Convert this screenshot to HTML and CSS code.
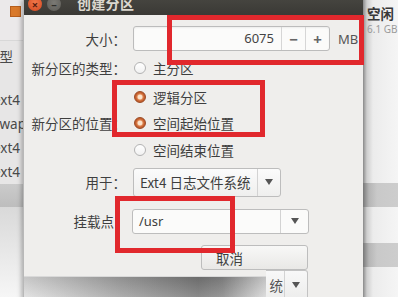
FILE: index.html
```html
<!DOCTYPE html>
<html lang="zh-CN">
<head>
<meta charset="utf-8">
<title>创建分区</title>
<link rel="stylesheet" href="styles.css">
</head>
<body>
<div class="screen">
  <aside class="bg-left">
    <div class="bl-top"><span class="app-icon"></span></div>
    <div class="bl-head"><span class="bl-cut">类型</span></div>
    <div class="bl-list">
      <div class="bl-item"><span class="bl-cut2">ext4</span></div>
      <div class="bl-item"><span class="bl-cut2">swap</span></div>
      <div class="bl-item"><span class="bl-cut2">ext4</span></div>
      <div class="bl-item"><span class="bl-cut2">ext4</span></div>
    </div>
    <div class="bl-band"></div>
    <div class="bl-foot"></div>
  </aside>

  <section class="dialog">
    <header class="titlebar">
      <span class="wbtn close">×</span>
      <span class="wbtn min">–</span>
      <span class="title">创建分区</span>
    </header>

    <div class="form">
      <label class="lbl">大小：</label>
      <div class="ctl">
        <div class="spin">
          <span class="spin-val">6075</span>
          <span class="spin-btn">−</span>
          <span class="spin-btn">+</span>
        </div>
        <span class="unit">MB</span>
      </div>

      <label class="lbl">新分区的类型：</label>
      <div class="ctl radio-row"><span class="radio"></span><span>主分区</span></div>

      <span class="lbl"></span>
      <div class="ctl radio-row"><span class="radio on"></span><span>逻辑分区</span></div>

      <label class="lbl">新分区的位置：</label>
      <div class="ctl radio-row"><span class="radio on"></span><span>空间起始位置</span></div>

      <span class="lbl"></span>
      <div class="ctl radio-row"><span class="radio"></span><span>空间结束位置</span></div>

      <label class="lbl">用于：</label>
      <div class="ctl">
        <div class="combo combo-fs">
          <span class="combo-text">Ext4 日志文件系统</span>
          <span class="combo-arrow"><i class="tri"></i></span>
        </div>
      </div>

      <label class="lbl lbl-mount">挂载点</label>
      <div class="ctl">
        <div class="combo combo-mount">
          <span class="combo-text">/usr</span>
          <span class="combo-arrow wide"><i class="tri"></i></span>
        </div>
      </div>

      <span class="lbl"></span>
      <div class="ctl ctl-end">
        <button class="btn-cancel">取消</button>
      </div>
    </div>

    <div class="bottom">
      <div class="shade"></div>
      <div class="combo-tail">
        <span class="tail-text">统</span>
        <span class="combo-arrow"><i class="tri"></i></span>
      </div>
    </div>
  </section>

  <aside class="bg-right">
    <div class="br-head">
      <div class="br-title">空闲</div>
      <div class="br-sub">6.1 GB</div>
    </div>
    <div class="br-band"></div>
    <div class="br-gap"></div>
    <div class="br-band"></div>
    <div class="br-rest"></div>
  </aside>

  <div class="mark mark-size"></div>
  <div class="mark mark-pos"></div>
  <div class="mark mark-mount"></div>
</div>
</body>
</html>
```

FILE: styles.css
```css
* { box-sizing: border-box; margin: 0; padding: 0; }
html, body { width: 398px; height: 297px; overflow: hidden; }
body {
  font-family: "Noto Sans", "Noto Sans CJK SC", sans-serif;
  color: #3e3e3e;
  background: #e8e8e8;
}

.screen {
  position: relative;
  display: grid;
  grid-template-columns: 23px 340px 35px;
  width: 398px;
  height: 297px;
  overflow: hidden;
}

/* ---------- left background window ---------- */
.bg-left {
  display: flex;
  flex-direction: column;
  background: #e7e6e6;
  overflow: hidden;
  font-size: 13.5px;
  color: #4a4a4a;
  white-space: nowrap;
}
.bl-top {
  height: 41px;
  padding: 6px 0 0 10px;
  border-bottom: 1px solid #d8d8d8;
  background: #ebe9ea;
}
.app-icon {
  display: block;
  width: 11px;
  height: 11px;
  background: #d9792a;
  border: 1px solid #b65e1c;
}
.bl-head {
  height: 29px;
  display: flex;
  align-items: center;
  font-family: "Noto Sans CJK SC", sans-serif;
}
.bl-cut { margin-left: -14px; }
.bl-list { padding-top: 18px; }
.bl-item {
  height: 24px;
  display: flex;
  align-items: center;
}
.bl-cut2 { margin-left: -7px; }
.bl-band {
  height: 23px;
  background: linear-gradient(#cbcbcb, #bdbdbd);
}
.bl-foot {
  flex: 1;
  background: linear-gradient(#d9d9d9, #f7f7f7);
}

/* ---------- dialog ---------- */
.dialog {
  position: relative;
  z-index: 1;
  display: flex;
  flex-direction: column;
  background: #efeeec;
  border-left: 1px solid #b8b8b8;
  box-shadow: -2px 0 4px rgba(0, 0, 0, 0.25);
}
.titlebar {
  height: 15px;
  flex: none;
  display: flex;
  align-items: flex-start;
  padding-left: 4px;
  gap: 5px;
  overflow: hidden;
  background: linear-gradient(#45443f, #3a3935);
}
.wbtn {
  width: 14px;
  height: 14px;
  margin-top: -3px;
  border-radius: 50%;
  display: flex;
  align-items: center;
  justify-content: center;
  font-size: 11px;
  font-weight: bold;
  line-height: 1;
}
.wbtn.close {
  background: radial-gradient(circle at 50% 40%, #f2784a, #d2461f);
  color: #5a2010;
}
.wbtn.min {
  background: radial-gradient(circle at 50% 40%, #7b7a75, #5b5a55);
  color: #2e2d2a;
}
.title {
  margin-left: 11px;
  margin-top: -6px;
  font-family: "Noto Sans CJK SC", sans-serif;
  font-size: 14px;
  font-weight: bold;
  line-height: 18px;
  color: #dcd8cf;
  letter-spacing: 0.3px;
}

.form {
  flex: none;
  height: 255px;
  display: grid;
  grid-template-columns: 102px 1fr;
  grid-template-rows: 27px 31px 27px 25px 29px 36px 42px 28px;
  column-gap: 7px;
  align-items: center;
  padding-top: 10px;
  font-family: "Noto Sans CJK SC", sans-serif;
  font-size: 13.5px;
}
.lbl {
  text-align: right;
  white-space: nowrap;
  color: #3f3f3f;
}
.lbl-mount { padding-right: 12px; }
.ctl {
  display: flex;
  align-items: center;
  white-space: nowrap;
}
.ctl-end { align-self: end; }
.radio-row { gap: 7px; padding-left: 1px; }

.radio {
  width: 12px;
  height: 12px;
  border-radius: 50%;
  border: 1px solid #b3b3b3;
  background: linear-gradient(#ffffff, #f1f1f1);
}
.radio.on {
  border-color: #9a4a24;
  background: radial-gradient(circle, #fbe3cc 0 2px, #e39563 2.8px, #c8612f 4px, #b4552a 100%);
}

/* spin button */
.spin {
  width: 197px;
  height: 25px;
  display: flex;
  border: 1px solid #bcbcbc;
  border-radius: 3px;
  background: #fbfbfa;
  box-shadow: inset 0 1px 2px rgba(0, 0, 0, 0.06);
  font-family: "Noto Sans", sans-serif;
  font-size: 13px;
}
.spin-val {
  flex: 1;
  text-align: right;
  padding-right: 7px;
  line-height: 23px;
  color: #444;
}
.spin-btn {
  width: 24px;
  border-left: 1px solid #d6d6d6;
  display: flex;
  align-items: center;
  justify-content: center;
  color: #666;
  font-size: 15px;
  font-weight: bold;
}
.unit {
  margin-left: 8px;
  font-family: "Noto Sans", sans-serif;
  font-size: 13px;
  color: #555;
}

/* combos */
.combo {
  display: flex;
  border: 1px solid #bdbdbd;
  border-radius: 3px;
  background: linear-gradient(#fbfbfb, #efefee);
}
.combo-fs { width: 148px; height: 29px; }
.combo-mount {
  width: 177px;
  height: 25px;
  margin-left: -1px;
  background: #fbfbfa;
}
.combo-text {
  flex: 1;
  padding-left: 6px;
  display: flex;
  align-items: center;
  color: #3e3e3e;
}
.combo-mount .combo-text {
  font-family: "Noto Sans", sans-serif;
  font-size: 13px;
}
.combo-arrow {
  width: 23px;
  border-left: 1px solid #d3d3d3;
  display: flex;
  align-items: center;
  justify-content: center;
}
.combo-arrow.wide { width: 28px; }
.tri {
  display: block;
  width: 0;
  height: 0;
  border-left: 4px solid transparent;
  border-right: 4px solid transparent;
  border-top: 6px solid #555;
}

.btn-cancel {
  margin-left: 68px;
  width: 107px;
  height: 25px;
  border: 1px solid #bdbdbd;
  border-radius: 3px;
  background: linear-gradient(#f8f8f7, #e9e8e6);
  font-family: "Noto Sans CJK SC", sans-serif;
  font-size: 13.5px;
  color: #3e3e3e;
  text-align: left;
  padding-left: 14px;
}

/* bottom strip under the dialog */
.bottom {
  flex: 1;
  display: flex;
  align-items: flex-start;
}
.shade {
  width: 242px;
  align-self: stretch;
  margin-top: 6px;
  border-top: 1px solid #d9d9d9;
  background:
    linear-gradient(rgba(0, 0, 0, 0.12), rgba(255, 255, 255, 0.15)),
    linear-gradient(to right, #e2e2e2 0%, #a4a4a4 40%, #7a7a7a 72%, #8a8a8a 82%, #dcdcdc 100%);
}
.combo-tail {
  width: 42px;
  height: 30px;
  display: flex;
  border: 1px solid #c3c3c3;
  border-left: none;
  border-radius: 0 3px 0 0;
  background: linear-gradient(#f8f8f8, #ededec);
}
.tail-text {
  flex: 1;
  display: flex;
  align-items: center;
  justify-content: flex-end;
  padding-right: 1px;
  overflow: hidden;
  font-family: "Noto Sans CJK SC", sans-serif;
  font-size: 13.5px;
  color: #555;
}

/* ---------- right background window ---------- */
.bg-right {
  display: grid;
  grid-template-rows: 40px 143px 24px 36px 24px 1fr;
  background: linear-gradient(to right, #8f8f8f 0, #cfcfcf 4px, #ececec 10px, #f5f5f5 100%);
  overflow: hidden;
  white-space: nowrap;
}
.br-head { padding: 6px 0 0 4px; grid-row: 1; }
.br-title {
  font-family: "Noto Sans CJK SC", sans-serif;
  font-weight: bold;
  font-size: 13.5px;
  line-height: 15px;
  color: #383838;
}
.br-sub {
  margin-top: 2px;
  font-family: "Noto Sans", sans-serif;
  font-size: 10px;
  line-height: 12px;
  color: #9a9a9a;
}
.br-band:nth-child(2) { grid-row: 3; }
.br-gap { grid-row: 4; }
.br-band:nth-child(4) { grid-row: 5; }
.br-band {
  background: linear-gradient(to right, #7c7c7c 0, #b5b5b5 6px, #c9c9c9 14px, #cdcdcd 100%);
}
.br-rest { grid-row: 6; }

/* ---------- red annotation boxes ---------- */
.mark {
  position: absolute;
  z-index: 5;
  border: 5px solid #e1282d;
}
.mark-size { left: 167px; top: 15px; width: 197px; height: 50px; }
.mark-pos { left: 112px; top: 80px; width: 153px; height: 57px; }
.mark-mount { left: 115px; top: 196px; width: 120px; height: 57px; }
```
